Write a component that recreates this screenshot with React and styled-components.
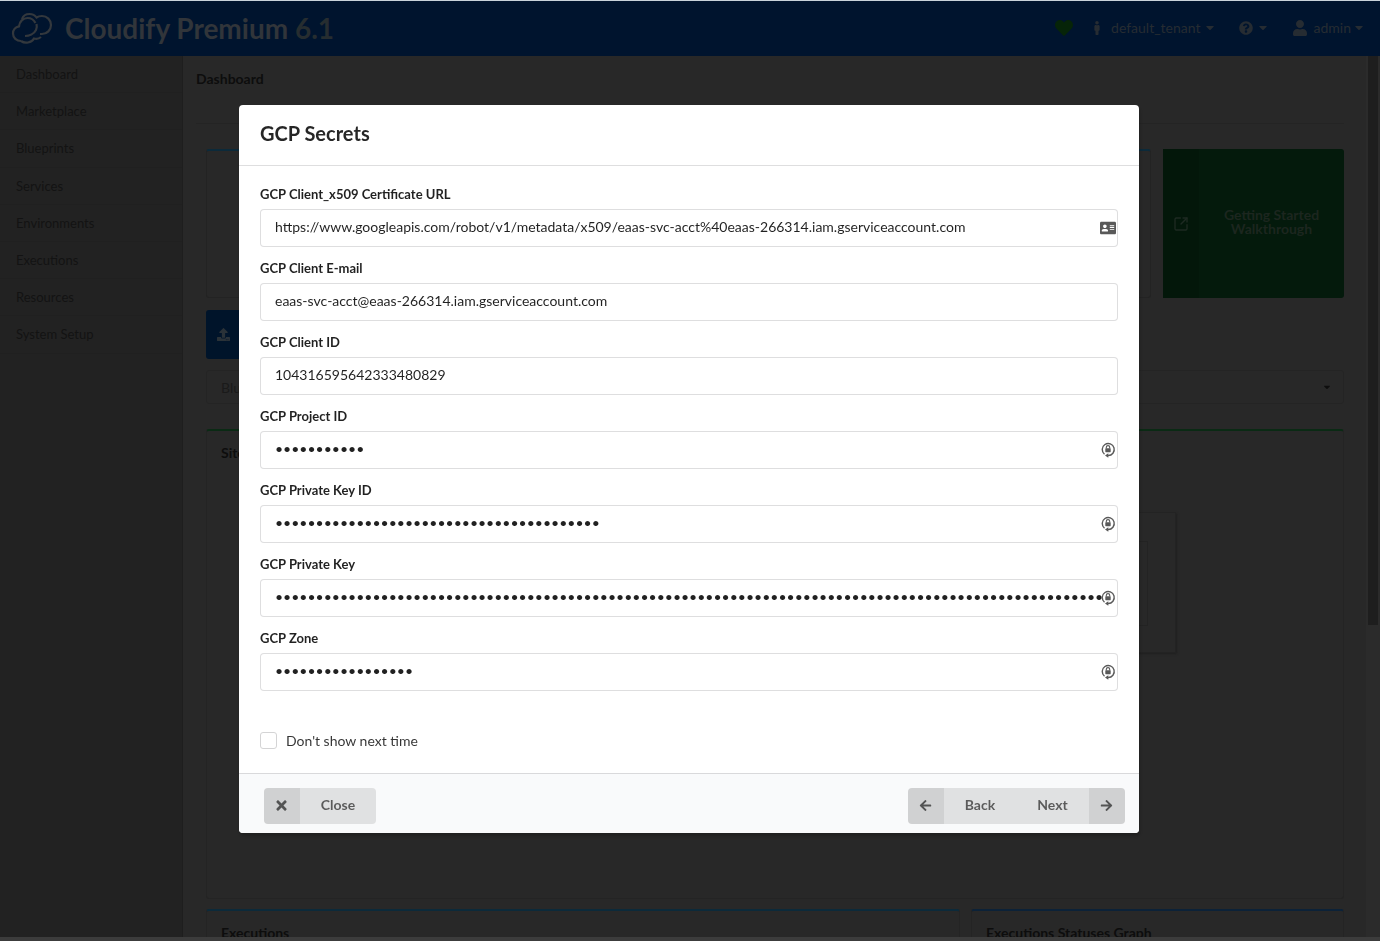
import React from "react"
import styled, { createGlobalStyle } from "styled-components"
import { FaAddressCard, FaArrowLeft, FaArrowRight, FaCaretDown, FaHeart, FaMale, FaQuestionCircle, FaTimes, FaUpload, FaUser } from "react-icons/fa"
import { SquareArrowOutUpRight } from "lucide-react"

const GlobalStyle = createGlobalStyle`
  html, body {
    margin: 0;
    height: 100%;
    overflow: hidden;
    background: #3c3c3c;
    font-family: Lato, "Open Sans", sans-serif;
  }
  * { box-sizing: border-box; }
`

const CloudLogo = () => (
  <svg width="42" height="32" viewBox="0 0 42 32" fill="none" stroke="#33383d" strokeWidth="2.2">
    <path d="M10 29c-4.500 0-8-3.300-8-7.500 0-3.600 2.500-6.500 6-7.200C8.500 9.500 12 6 16.500 6c3.500 0 6.500 2 7.900 5" />
    <path d="M11 7c1-3 4-5 7.500-5 3 0 5.500 1.300 7 3.500C27 4.500 29 4 31 4c5 0 9 4 9 9s-4 9-9 9h-2" />
    <path d="M10 29c2 1.500 4.500 2 7 1.500 3-.5 5-2 6-4 2 .5 5 .2 7-1.500" />
    <path d="M14 24c4 0 9-2 11-6 1-2 1-4 .5-6" />
  </svg>
)

const SecretIcon = () => (
  <svg width="16" height="18" viewBox="0 0 16 18" fill="none">
    <path d="M4.500 13.200A6 6 0 1 1 8 14.500" stroke="#595959" strokeWidth="1.400" />
    <path d="M8.300 12.300 5 14.500l3.300 2.200z" fill="#595959" />
    <rect x="5.300" y="7.300" width="5.400" height="3.900" rx=".6" fill="#595959" />
    <path d="M6.300 7.500V6.300a1.700 1.700 0 0 1 3.400 0v1.200" stroke="#595959" strokeWidth="1.100" />
  </svg>
)

const Page = styled.div`
  height: 937px;
  display: flex;
  flex-direction: column;
  background: #282828;
  overflow: hidden;
  border-top: 1px solid #c9d3da;
`

const Header = styled.header`
  flex: 0 0 55px;
  display: flex;
  align-items: center;
  gap: 25px;
  padding: 0 17px 2px 11px;
  background: #00142e;
`

const Brand = styled.div`
  display: flex;
  align-items: center;
  gap: 12px;
  margin-right: auto;
  font-size: 28px;
  font-weight: 700;
  color: #31353a;
`

const BrandVersion = styled.span`
  color: #262d30;
`

const HeartItem = styled.div`
  display: flex;
  margin-right: -8px;
  color: #062408;
`

const HeaderItem = styled.div`
  display: flex;
  align-items: center;
  gap: ${p => p.$gap}px;
  font-size: 14px;
  color: #262c32;
`

const TenantIcon = styled(FaMale)`
  margin-right: 2px;
`

const UserIcon = styled(FaUser)`
  margin-right: 2px;
`

const Caret = styled(FaCaretDown)`
  width: 8px;
  height: 13px;
`

const Body = styled.div`
  flex: 1;
  display: flex;
  min-height: 0;
`

const Sidebar = styled.nav`
  flex: 0 0 183px;
  background: #222;
  border-right: 1px solid #1e1e1e;
`

const SideItem = styled.div`
  height: 37.200px;
  padding: 0 16px;
  display: flex;
  align-items: center;
  font-size: 13px;
  color: #131313;
  border-bottom: 1px solid #202020;
`

const Main = styled.main`
  flex: 1;
  min-width: 0;
  padding: 0 22px 0 23px;
  display: flex;
  flex-direction: column;
  > * { flex-shrink: 0; }
`

const Crumb = styled.div`
  height: 68px;
  margin-left: -10px;
  padding-top: 14px;
  font-size: 14px;
  font-weight: 700;
  color: #0d0d0d;
  border-bottom: 1px solid #242424;
`

const TopRow = styled.div`
  display: flex;
  gap: 12px;
  margin-top: 25px;
`

const Card = styled.div`
  flex: 1;
  height: 149px;
  border: 1px solid #232323;
  border-top: 2px solid #0c2a3a;
  border-radius: 3px;
`

const WalkthroughButton = styled.div`
  flex: 0 0 181px;
  height: 149px;
  display: flex;
  background: #041a0c;
  border-radius: 3px;
`

const WalkthroughIcon = styled.div`
  flex: 0 0 36px;
  display: flex;
  align-items: center;
  justify-content: center;
  background: #03170a;
  color: #1e2a22;
`

const WalkthroughLabel = styled.div`
  flex: 1;
  padding-top: 59px;
  text-align: center;
  font-size: 14px;
  font-weight: 700;
  line-height: 14px;
  color: #1c261f;
`

const UploadButton = styled.div`
  width: 120px;
  height: 49px;
  margin-top: 12px;
  padding-left: 11px;
  display: flex;
  align-items: center;
  background: #00142a;
  border-radius: 3px;
  color: #2a3238;
`

const FilterBar = styled.div`
  height: 34px;
  margin-top: 11px;
  padding: 0 11px 0 14px;
  display: flex;
  align-items: center;
  justify-content: space-between;
  border: 1px solid #242424;
  border-radius: 3px;
  font-size: 14px;
  color: #1a1a1a;
  svg { color: #0e0e0e; }
`

const Widget = styled.section`
  position: relative;
  height: ${p => p.$height}px;
  margin-top: ${p => p.$top}px;
  padding: 13px 14px;
  flex: ${p => p.$grow || "none"};
  border: 1px solid #242424;
  border-top: 2px solid ${p => p.$accent};
  border-radius: 3px;
  font-size: 14px;
  font-weight: 700;
  color: #0d0d0d;
`

const SiteMapCard = styled.div`
  position: absolute;
  left: 700px;
  top: 81px;
  width: 269px;
  height: 141px;
  border: 1px solid #232323;
  box-shadow: 1px 1px 2px #202020;
`

const SiteMapInner = styled.div`
  position: absolute;
  right: 27px;
  top: 28px;
  width: 100px;
  height: 85px;
  border: 1px solid #232323;
`

const BottomRow = styled.div`
  display: flex;
  gap: 11px;
`

const Scrollbar = styled.aside`
  flex: 0 0 14px;
  background: #2b2b2b;
  padding: 0 2px;
`

const ScrollThumb = styled.div`
  height: 569px;
  background: #1e1e1e;
`

const Dimmer = styled.div`
  position: fixed;
  inset: 0;
  display: flex;
  justify-content: center;
  align-items: flex-start;
  padding: 105px 241px 0 239px;
`

const Modal = styled.div`
  width: 900px;
  height: 728px;
  display: flex;
  flex-direction: column;
  background: #fff;
  border-radius: 4px;
  box-shadow: 1px 3px 3px rgba(0, 0, 0, .2);
`

const ModalHeader = styled.h2`
  flex: 0 0 61px;
  margin: 0;
  padding: 0 21px 4px;
  display: flex;
  align-items: center;
  font-size: 20px;
  font-weight: 700;
  color: rgba(0, 0, 0, .85);
  border-bottom: 1px solid rgba(34, 36, 38, .15);
`

const ModalForm = styled.form`
  flex: 1;
  padding: 19px 21px 0;
  display: flex;
  flex-direction: column;
`

const Field = styled.div`
  height: 74px;
`

const FieldLabel = styled.label`
  display: block;
  height: 18px;
  margin-bottom: 6px;
  font-size: 13px;
  line-height: 18px;
  font-weight: 700;
  color: rgba(0, 0, 0, .87);
`

const InputBox = styled.div`
  position: relative;
  height: 38px;
`

const TextInput = styled.input`
  width: 100%;
  height: 100%;
  padding: 0 14px 4px;
  border: 1px solid rgba(34, 36, 38, .15);
  border-radius: 4px;
  outline: none;
  font-family: inherit;
  font-size: 14px;
  color: rgba(0, 0, 0, .87);
`

const InputIcon = styled.span`
  position: absolute;
  right: 2px;
  top: 0;
  bottom: 0;
  width: 16px;
  display: flex;
  align-items: center;
  justify-content: center;
  color: #595959;
`

const CheckRow = styled.div`
  margin-top: 29px;
  display: flex;
  align-items: center;
  gap: 9px;
  font-size: 14px;
  color: rgba(0, 0, 0, .8);
`

const CheckBox = styled.span`
  width: 17px;
  height: 17px;
  border: 1px solid #d4d4d5;
  border-radius: 3px;
  background: #fff;
`

const ModalFooter = styled.footer`
  flex: 0 0 60px;
  padding: 5px 14px 0 25px;
  display: flex;
  align-items: center;
  justify-content: space-between;
  background: #f9fafb;
  border-top: 1px solid rgba(34, 36, 38, .15);
  border-radius: 0 0 4px 4px;
`

const ButtonGroup = styled.div`
  display: flex;
  height: 36px;
  border-radius: 4px;
  overflow: hidden;
  background: #e0e1e2;
  font-size: 14px;
  font-weight: 700;
  color: rgba(0, 0, 0, .6);
`

const ButtonIcon = styled.span`
  flex: 0 0 36px;
  padding: 0 1px 1px 0;
  display: flex;
  align-items: center;
  justify-content: center;
  background: rgba(0, 0, 0, .07);
`

const ButtonText = styled.span`
  width: ${p => p.$width}px;
  padding-bottom: 4px;
  display: flex;
  align-items: center;
  justify-content: center;
`

const navItems = ["Dashboard", "Marketplace", "Blueprints", "Services", "Environments", "Executions", "Resources", "System Setup"]

const fields = [
  { label: "GCP Client_x509 Certificate URL", value: "https://www.googleapis.com/robot/v1/metadata/x509/eaas-svc-acct%40eaas-266314.iam.gserviceaccount.com", icon: true },
  { label: "GCP Client E-mail", value: "eaas-svc-acct@eaas-266314.iam.gserviceaccount.com" },
  { label: "GCP Client ID", value: "104316595642333480829" },
  { label: "GCP Project ID", value: "x".repeat(11), secret: true },
  { label: "GCP Private Key ID", value: "x".repeat(40), secret: true },
  { label: "GCP Private Key", value: "x".repeat(400), secret: true },
  { label: "GCP Zone", value: "x".repeat(17), secret: true },
]

const App = () => (
  <>
    <GlobalStyle />
    <Page>
      <Header>
        <Brand>
          <CloudLogo />
          <span>Cloudify Premium <BrandVersion>6.1</BrandVersion></span>
        </Brand>
        <HeartItem><FaHeart size={18} /></HeartItem>
        <HeaderItem $gap={5}><TenantIcon size={14} /> default_tenant <Caret /></HeaderItem>
        <HeaderItem $gap={6}><FaQuestionCircle size={14} /> <Caret /></HeaderItem>
        <HeaderItem $gap={4}><UserIcon size={16} /> admin <Caret /></HeaderItem>
      </Header>
      <Body>
        <Sidebar>
          {navItems.map(item => <SideItem key={item}>{item}</SideItem>)}
        </Sidebar>
        <Main>
          <Crumb>Dashboard</Crumb>
          <TopRow>
            <Card />
            <WalkthroughButton>
              <WalkthroughIcon><SquareArrowOutUpRight size={16} /></WalkthroughIcon>
              <WalkthroughLabel>Getting Started<br />Walkthrough</WalkthroughLabel>
            </WalkthroughButton>
          </TopRow>
          <UploadButton><FaUpload size={13} /></UploadButton>
          <FilterBar>Blueprints <FaCaretDown size={10} /></FilterBar>
          <Widget $height={470} $top={25} $accent="#0a2a14">
            Site Map
            <SiteMapCard><SiteMapInner /></SiteMapCard>
          </Widget>
          <BottomRow>
            <Widget $height={60} $top={10} $grow="0 0 754px" $accent="#0c2a3a">Executions</Widget>
            <Widget $height={60} $top={10} $grow="1" $accent="#0c2238">Executions Statuses Graph</Widget>
          </BottomRow>
        </Main>
        <Scrollbar><ScrollThumb /></Scrollbar>
      </Body>
    </Page>
    <Dimmer>
      <Modal>
        <ModalHeader>GCP Secrets</ModalHeader>
        <ModalForm>
          {fields.map(field => (
            <Field key={field.label}>
              <FieldLabel>{field.label}</FieldLabel>
              <InputBox>
                <TextInput type={field.secret ? "password" : "text"} value={field.value} readOnly />
                {field.icon && <InputIcon><FaAddressCard size={16} /></InputIcon>}
                {field.secret && <InputIcon><SecretIcon /></InputIcon>}
              </InputBox>
            </Field>
          ))}
          <CheckRow><CheckBox /> Don't show next time</CheckRow>
        </ModalForm>
        <ModalFooter>
          <ButtonGroup>
            <ButtonIcon><FaTimes size={15} /></ButtonIcon>
            <ButtonText $width={76}>Close</ButtonText>
          </ButtonGroup>
          <ButtonGroup>
            <ButtonIcon><FaArrowLeft size={13} /></ButtonIcon>
            <ButtonText $width={72}>Back</ButtonText>
            <ButtonText $width={73}>Next</ButtonText>
            <ButtonIcon><FaArrowRight size={13} /></ButtonIcon>
          </ButtonGroup>
        </ModalFooter>
      </Modal>
    </Dimmer>
  </>
)

export default App
